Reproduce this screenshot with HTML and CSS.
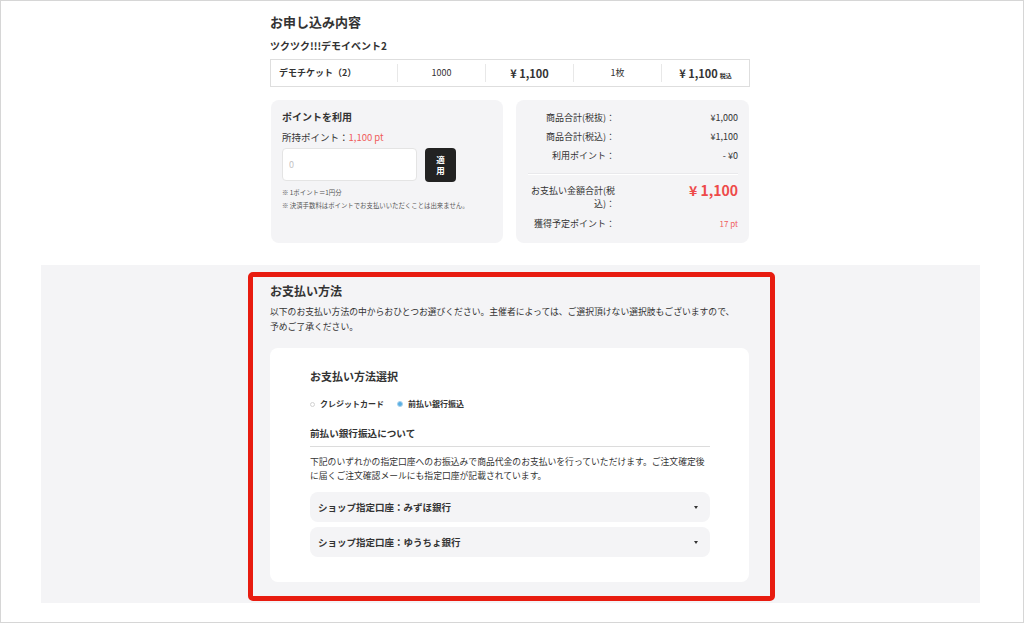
FILE: index.html
```html
<!DOCTYPE html>
<html lang="ja">
  <head>
    <meta charset="UTF-8" />
    <meta name="viewport" content="width=device-width, initial-scale=1.0" />
    <title>お申し込み内容</title>
    <link rel="stylesheet" href="styles.css">
  </head>
  <body>
    <div class="frame">
      <div class="order">
        <h1 class="order-title">お申し込み内容</h1>
        <div class="event-name">ツクツク!!!デモイベント2</div>
        <div class="ticket-row">
          <div class="cell cell-name">デモチケット（2）</div>
          <div class="cell">1000</div>
          <div class="cell cell-bold">¥ 1,100</div>
          <div class="cell">1枚</div>
          <div class="cell cell-bold">¥ 1,100<span class="tax">税込</span></div>
        </div>
        <div class="boxes">
          <div class="box points">
            <div class="points-title">ポイントを利用</div>
            <div class="points-have">所持ポイント：<span class="red">1,100 pt</span></div>
            <div class="points-form">
              <input class="points-input" type="text" placeholder="0">
              <button class="apply-btn">適用</button>
            </div>
            <p class="note">※ 1ポイント＝1円分</p>
            <p class="note">※ 決済手数料はポイントでお支払いいただくことは出来ません。</p>
          </div>
          <div class="box summary">
            <div class="sum-row"><span class="sum-label">商品合計(税抜)：</span><span class="sum-value">¥1,000</span></div>
            <div class="sum-row"><span class="sum-label">商品合計(税込)：</span><span class="sum-value">¥1,100</span></div>
            <div class="sum-row"><span class="sum-label">利用ポイント：</span><span class="sum-value">- ¥0</span></div>
            <div class="sum-line"></div>
            <div class="sum-row sum-total"><span class="sum-label">お支払い金額合計(税込)：</span><span class="sum-value">¥ 1,100</span></div>
            <div class="sum-row sum-get"><span class="sum-label">獲得予定ポイント：</span><span class="sum-value">17 pt</span></div>
          </div>
        </div>
      </div>

      <div class="band">
        <div class="highlight">
          <h2 class="pay-title">お支払い方法</h2>
          <p class="pay-desc">以下のお支払い方法の中からおひとつお選びください。主催者によっては、ご選択頂けない選択肢もございますので、<br>予めご了承ください。</p>
          <div class="pay-card">
            <h3 class="card-title">お支払い方法選択</h3>
            <div class="radios">
              <label class="radio"><span class="dot"></span>クレジットカード</label>
              <label class="radio checked"><span class="dot"></span>前払い銀行振込</label>
            </div>
            <h4 class="bank-title">前払い銀行振込について</h4>
            <p class="bank-desc">下記のいずれかの指定口座へのお振込みで商品代金のお支払いを行っていただけます。ご注文確定後<br>に届くご注文確認メールにも指定口座が記載されています。</p>
            <div class="acc">ショップ指定口座：みずほ銀行<span class="caret"></span></div>
            <div class="acc">ショップ指定口座：ゆうちょ銀行<span class="caret"></span></div>
          </div>
        </div>
      </div>
    </div>
  </body>
</html>
```

FILE: styles.css
```css
  body {
    margin: 0;
    font-family: "Noto Sans CJK JP", "Noto Sans", sans-serif;
    color: #333;
  }
  .frame {
    box-sizing: border-box;
    width: 1024px;
    height: 623px;
    border: 1px solid #d6d6d6;
    background: #fff;
    overflow: hidden;
  }
  .order {
    width: 480px;
    margin-left: 269px;
    padding-top: 11px;
  }
  .order-title {
    margin: 0;
    font-size: 13px;
    line-height: 20px;
    font-weight: 700;
  }
  .event-name {
    margin-top: 6px;
    font-size: 10px;
    line-height: 16px;
    font-weight: 700;
  }
  .ticket-row {
    box-sizing: border-box;
    display: flex;
    height: 28px;
    margin-top: 5px;
    border: 1px solid #dedede;
    align-items: center;
  }
  .cell {
    width: 87px;
    height: 18px;
    line-height: 18px;
    font-size: 9px;
    text-align: center;
    border-left: 1px solid #e8e8e8;
  }
  .cell-name {
    width: 126px;
    padding-left: 8px;
    box-sizing: border-box;
    text-align: left;
    font-weight: 700;
    border-left: none;
  }
  .cell-bold {
    font-size: 11px;
    font-weight: 700;
  }
  .cell:last-child {
    flex: 1;
  }
  .tax {
    font-size: 6px;
    margin-left: 2px;
    font-weight: 700;
  }
  .boxes {
    display: grid;
    grid-template-columns: 232px 233px;
    gap: 13px;
    margin: 13px 0 0 1px;
  }
  .box {
    box-sizing: border-box;
    height: 143px;
    background: #f4f4f6;
    border-radius: 8px;
  }
  .points {
    padding: 9px 11px 0;
  }
  .points-title {
    font-size: 10px;
    line-height: 16px;
    font-weight: 700;
  }
  .points-have {
    margin-top: 4px;
    font-size: 9.5px;
    line-height: 16px;
  }
  .red {
    color: #f05c5c;
  }
  .points-form {
    display: flex;
    gap: 8px;
    margin-top: 3px;
  }
  .points-input {
    box-sizing: border-box;
    width: 135px;
    height: 33px;
    border: 1px solid #e4e4e4;
    border-radius: 4px;
    padding: 0 6px;
    font-size: 9px;
    font-family: inherit;
    outline: none;
  }
  .points-input::placeholder {
    color: #c4c4c4;
  }
  .apply-btn {
    width: 31px;
    height: 34px;
    padding: 0 8px;
    border: none;
    border-radius: 4px;
    background: #222;
    color: #fff;
    font-size: 8.5px;
    line-height: 11px;
    font-family: inherit;
    font-weight: 700;
  }
  .note {
    margin: 0;
    font-size: 6.4px;
    line-height: 13px;
    color: #555;
  }
  .points-form + .note {
    margin-top: 4px;
  }
  .summary {
    padding: 8px 11px 0 11px;
  }
  .sum-row {
    display: flex;
    font-size: 9px;
    line-height: 19px;
  }
  .sum-label {
    width: 88px;
    text-align: right;
    word-break: break-all;
  }
  .sum-value {
    flex: 1;
    text-align: right;
  }
  .sum-line {
    height: 1px;
    margin: 8px 0 0 1px;
    background: #fff;
    border-top: 1px solid #e9e9ec;
  }
  .sum-total {
    margin-top: 9px;
    line-height: 13px;
  }
  .sum-total .sum-value {
    font-size: 14px;
    font-weight: 700;
    color: #ee4a4a;
  }
  .sum-get {
    margin-top: 7px;
    line-height: 13px;
  }
  .sum-get .sum-value {
    font-size: 8px;
    color: #f05c5c;
  }
  .band {
    width: 939px;
    margin: 22px 0 0 40px;
    padding: 7px 0 2px;
    background: #f4f4f6;
  }
  .highlight {
    box-sizing: border-box;
    width: 527px;
    margin-left: 207px;
    padding: 5px 21px 14px 17px;
    border: 5px solid #e81c10;
    border-radius: 5px;
  }
  .pay-title {
    margin: 0;
    font-size: 12px;
    line-height: 18px;
    font-weight: 700;
  }
  .pay-desc {
    margin: 4px 0 0;
    font-size: 8.8px;
    line-height: 15px;
  }
  .pay-card {
    box-sizing: border-box;
    height: 234px;
    margin-top: 14px;
    padding: 20px 39px 0 40px;
    background: #fff;
    border-radius: 8px;
  }
  .card-title {
    margin: 0;
    font-size: 11px;
    line-height: 16px;
    font-weight: 700;
  }
  .radios {
    display: flex;
    gap: 13px;
    margin-top: 14px;
    font-size: 8px;
    line-height: 12px;
    font-weight: 700;
  }
  .radio {
    display: flex;
    align-items: center;
    gap: 5px;
  }
  .dot {
    box-sizing: border-box;
    width: 5px;
    height: 5px;
    border: 1px solid #d2d2d2;
    border-radius: 50%;
  }
  .checked .dot {
    width: 6px;
    height: 6px;
    background: #5aaee2;
    border-color: #a9d4ef;
  }
  .bank-title {
    margin: 16px 0 0;
    padding-bottom: 6px;
    font-size: 9.6px;
    line-height: 14px;
    font-weight: 700;
    border-bottom: 1px solid #dcdcdc;
  }
  .bank-desc {
    margin: 8px 0 0;
    font-size: 8.8px;
    line-height: 14px;
  }
  .acc {
    display: flex;
    justify-content: space-between;
    align-items: center;
    height: 30px;
    margin-top: 9px;
    padding: 0 12px 0 8px;
    background: #f4f4f6;
    border-radius: 8px;
    font-size: 9.5px;
    font-weight: 700;
  }
  .acc + .acc {
    margin-top: 5px;
  }
  .caret {
    width: 0;
    height: 0;
    border-left: 2.5px solid transparent;
    border-right: 2.5px solid transparent;
    border-top: 3px solid #333;
  }
```
